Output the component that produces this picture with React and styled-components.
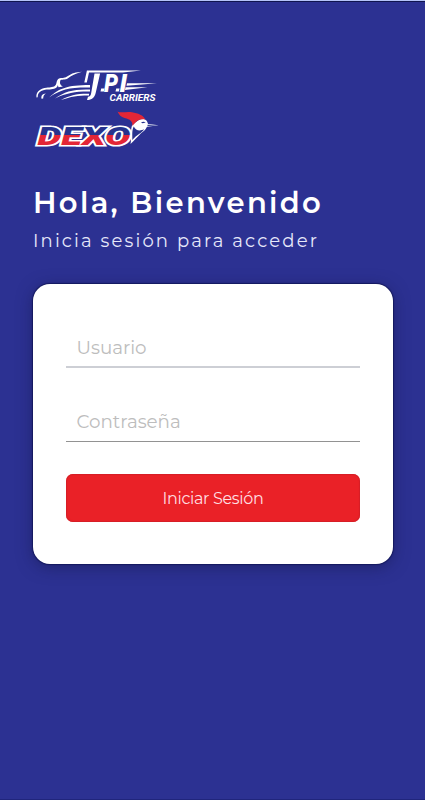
import React from 'react';
import styled, { createGlobalStyle } from 'styled-components';

const GlobalStyle = createGlobalStyle`
  * {
    box-sizing: border-box;
  }

  body {
    margin: 0;
    background: #2c3192;
    font-family: Montserrat, Inter, sans-serif;
  }
`;

const Screen = styled.main`
  min-height: 800px;
  padding: 67px 32px 0 33px;
  background: #2c3192;
  border-top: 1px solid #b4c3f8;
  box-shadow: inset 0 1px 0 #10154f, inset 0 -1px 0 #20257c;
`;

const Logos = styled.div`
  display: flex;
  flex-direction: column;
  height: 84px;

  svg {
    display: block;
  }
`;

const Title = styled.h1`
  margin: 33px 0 0;
  color: #fff;
  font-size: 29px;
  font-weight: 600;
  line-height: 36px;
  letter-spacing: 2.35px;
  white-space: nowrap;
`;

const Subtitle = styled.p`
  margin: 7px 0 0;
  color: #e6e8fa;
  font-size: 18px;
  font-weight: 400;
  line-height: 26px;
  letter-spacing: 2.14px;
  white-space: nowrap;
`;

const Card = styled.form`
  display: flex;
  flex-direction: column;
  height: 280px;
  margin-top: 30px;
  padding: 41px 33px 0;
  background: #fff;
  border-radius: 17px;
  box-shadow: 0 0 1px 1px #15195f, 0 3px 16px rgba(20, 22, 70, 0.5);
`;

const Input = styled.input`
  width: 100%;
  height: ${(props) => props.$height};
  margin-bottom: 32px;
  padding: ${(props) => props.$top} 11px 0 10.5px;
  border: 0;
  border-bottom: ${(props) => props.$line};
  border-radius: 0;
  outline: none;
  background: transparent;
  color: #444;
  font-family: inherit;
  font-size: 18.3px;

  &::placeholder {
    color: #bdbdbd;
    opacity: 1;
  }
`;

const Button = styled.button`
  width: 100%;
  height: 48px;
  padding: 0;
  border: 0;
  border-radius: 7px;
  background: #ea2127;
  box-shadow: inset 0 0 1px 1px #d51f27;
  color: #ffdfe0;
  font-family: inherit;
  font-size: 16px;
  font-weight: 400;
  letter-spacing: -0.35px;
  cursor: pointer;
`;

const LogoText = styled.text`
  font-family: Roboto, 'Liberation Sans', sans-serif;
  font-weight: ${(props) => props.$weight || 900};
  font-style: italic;
`;

const CarriersLogo = () => (
  <svg width='128' height='38' viewBox='33 68 128 38' role='img' aria-label='JPI Carriers'>
    <g fill='#fff'>
      <path d='M36.500 97.500c-.8-5 3-8.500 8-9.500 5-.8 8-.2 10.500-2.200 2.300-1.800.7-5.300 4-7.300 2.500-1.200 5 .3 8-2 5-3.400 9-4.500 15-4.800-7 2-10 3.500-14 6.600-3 2.200-6 .7-8.500 2.200-1.700 1.500-.7 5-3 7-3 2.500-7 1.500-11.500 2.300-5 1-7.200 3-7.300 7.500z' />
      <path d='M41.500 98.800c-.6-3 1-5 4.300-5.200-1.800 1.300-2.600 2.600-2.600 5z' />
      <path d='M60.500 80c-1 3-.7 5 2.500 6.500l-4.500.8c-1-2.500-.8-5 .5-7.300z' />
      <path d='M49 97.500c10-9 18-12.500 41-12.500v2.600c-20-.3-29 1.700-41 9.900z' />
      <path d='M55 98.500c10-7 18-9.500 35-9v2.100c-14-.2-23 1.300-35 6.900z' />
      <path d='M61 100c8-4.600 16-6.500 28-6.300v1.700c-10-.1-18 .9-28 4.600z' />
      <path d='M84.300 82.500l2.600-12h54l-18 2H89l-2.200 10z' />
      <path d='M94.500 73.500h5.600l-4.300 19c-1.300 5.500-4 7.500-8.800 7.500l1-3.300c2 0 2.700-1.200 3.200-3.700z' />
      <path d='M127 83.200l30 .1-30.500 2.500zM125.500 87.300l22-.1-22.500 2.900z' />
      <path d='M101.200 88.500h3.300l-.7 3h-3.300zM116.200 88.500h3.300l-.7 3h-3.300z' />
    </g>
    <LogoText x='104' y='91.500' fontSize='25' textLength='14' lengthAdjust='spacingAndGlyphs' fill='#fff'>P</LogoText>
    <LogoText x='119.500' y='91.500' fontSize='25' textLength='7.500' lengthAdjust='spacingAndGlyphs' fill='#fff'>I</LogoText>
    <LogoText $weight={700} x='109.500' y='101.200' fontSize='8.800' textLength='46' lengthAdjust='spacingAndGlyphs' fill='#fff'>CARRIERS</LogoText>
  </svg>
);

const DexoLogo = () => (
  <svg width='128' height='46' viewBox='33 106 128 46' role='img' aria-label='Dexo'>
    <defs>
      <linearGradient id='dexo' x1='0' y1='126' x2='0' y2='145' gradientUnits='userSpaceOnUse'>
        <stop offset='.5' stopColor='#27338d' />
        <stop offset='.5' stopColor='#e32636' />
      </linearGradient>
    </defs>
    <LogoText
      x='37.500'
      y='145'
      fontSize='26.500'
      textLength='93'
      lengthAdjust='spacingAndGlyphs'
      fill='url(#dexo)'
      stroke='#fff'
      strokeWidth='3.200'
      strokeLinejoin='miter'
      paintOrder='stroke'
    >
      DEXO
    </LogoText>
    <path d='M130.500 144c1.500-6-.5-13 1.500-18.500 3-3 7-6.500 11-6.500 3 0 4.500 2.500 5 5l10.500 1.200-11.500 1.600c-1.500 3.600-4 4.700-6 6.500-3.500 3.500-6.500 7-10.500 10.700z' fill='#fff' />
    <path d='M132.300 140c.3-4-.8-9.500 1.500-13.500 2 4 6 5.200 10.500 2.500-2.500 4.400-7.500 5.500-12 11z' fill='#27338d' />
    <path d='M141 122.800c1.300-1.200 3.500-1.200 4.700-.2l-3 .7z' fill='#27338d' />
    <path d='M147.500 124.700l11 .6-11 .6z' fill='#27338d' />
    <path d='M132.500 126c0-5-2-6.500-8-8-3.500-1-5.500-3-7-6.500 3 2 9-.2 14.500.8 6 1 11.500 3 13.300 7.200-6-1.300-9 1.500-12.800 6.500z' fill='#e32636' />
  </svg>
);

const App = () => {
  return (
    <>
      <GlobalStyle />
      <Screen>
        <Logos>
          <CarriersLogo />
          <DexoLogo />
        </Logos>
        <Title>Hola, Bienvenido</Title>
        <Subtitle>Inicia sesión para acceder</Subtitle>
        <Card onSubmit={(e) => e.preventDefault()}>
          <Input type='text' placeholder='Usuario' $height='43px' $top='3px' $line='2px solid #cdcfd5' />
          <Input type='password' placeholder='Contraseña' $height='42px' $top='1px' $line='1px solid #929292' />
          <Button type='submit'>Iniciar Sesión</Button>
        </Card>
      </Screen>
    </>
  );
};

export default App;
